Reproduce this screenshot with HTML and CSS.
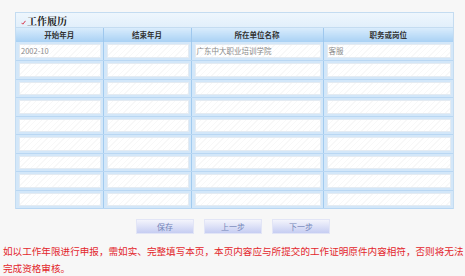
FILE: index.html
```html
<!DOCTYPE html>
<html lang="zh-CN">
<head>
<meta charset="utf-8">
<title>工作履历</title>
<link rel="stylesheet" href="styles.css">
</head>
<body>
<div class="page">
  <div class="panel">
    <div class="panel-title">
      <svg class="mark" width="5" height="5" viewBox="0 0 6 6"><path d="M0.6 3.4 L2.2 5 L5.4 1" fill="none" stroke="#d8344a" stroke-width="1.2"/></svg>
      <span>工作履历</span>
    </div>
    <table class="grid">
      <colgroup>
        <col class="c1"><col class="c2"><col class="c3"><col class="c4">
      </colgroup>
      <thead>
        <tr><th>开始年月</th><th>结束年月</th><th>所在单位名称</th><th>职务或岗位</th></tr>
      </thead>
      <tbody>
        <tr><td><div class="field">2002-10</div></td><td><div class="field"></div></td><td><div class="field">广东中大职业培训学院</div></td><td><div class="field">客服</div></td></tr>
        <tr><td><div class="field"></div></td><td><div class="field"></div></td><td><div class="field"></div></td><td><div class="field"></div></td></tr>
        <tr><td><div class="field"></div></td><td><div class="field"></div></td><td><div class="field"></div></td><td><div class="field"></div></td></tr>
        <tr><td><div class="field"></div></td><td><div class="field"></div></td><td><div class="field"></div></td><td><div class="field"></div></td></tr>
        <tr><td><div class="field"></div></td><td><div class="field"></div></td><td><div class="field"></div></td><td><div class="field"></div></td></tr>
        <tr><td><div class="field"></div></td><td><div class="field"></div></td><td><div class="field"></div></td><td><div class="field"></div></td></tr>
        <tr><td><div class="field"></div></td><td><div class="field"></div></td><td><div class="field"></div></td><td><div class="field"></div></td></tr>
        <tr><td><div class="field"></div></td><td><div class="field"></div></td><td><div class="field"></div></td><td><div class="field"></div></td></tr>
        <tr><td><div class="field"></div></td><td><div class="field"></div></td><td><div class="field"></div></td><td><div class="field"></div></td></tr>
      </tbody>
    </table>
  </div>
  <div class="actions">
    <button class="btn" type="button">保存</button>
    <button class="btn" type="button">上一步</button>
    <button class="btn" type="button">下一步</button>
  </div>
</div>
<p class="note">如以工作年限进行申报，需如实、完整填写本页，本页内容应与所提交的工作证明原件内容相符，否则将无法完成资格审核。</p>
</body>
</html>
```
FILE: styles.css
```css
html, body {
  margin: 0;
  padding: 0;
  background: #f7f7f7;
  font-family: "Noto Sans CJK SC", "Noto Sans", sans-serif;
}

.page {
  padding: 12px 10px 0 15px;
}

.panel {
  width: 439px;
  border: 1px solid #c4dcf1;
  border-bottom: none;
  box-sizing: border-box;
  background: #eaf4fd;
}

.panel-title {
  height: 15px;
  display: flex;
  align-items: center;
  gap: 1px;
  padding-left: 5px;
  background: linear-gradient(#eef6fd, #e2effb);
  font-family: "Noto Serif CJK SC", "Noto Sans CJK SC", serif;
  font-weight: bold;
  font-size: 10px;
  color: #222;
  border-bottom: 1px solid #c4dcf1;
  box-sizing: border-box;
}

.mark {
  margin-top: 4px;
}

.grid {
  width: 100%;
  border-collapse: collapse;
  table-layout: fixed;
}

.c1 { width: 87px; }
.c2 { width: 88px; }
.c3 { width: 132px; }
.c4 { width: auto; }

.grid th {
  height: 14px;
  padding: 0;
  background: linear-gradient(#d9ecfc, #a9d1f4);
  font-size: 7.5px;
  font-weight: bold;
  color: #333;
  border-right: 1px solid #9fc8ee;
  line-height: 14px;
}

.grid th:last-child,
.grid td:last-child {
  border-right: none;
}

.grid td {
  height: 18.5px;
  padding: 2px 2px 2px 3px;
  box-sizing: border-box;
  background: #d3e7f9;
  border-right: 1px solid #a2cbef;
  border-bottom: 1px solid #b9d7f3;
}

.field {
  height: 13.5px;
  box-sizing: border-box;
  border: 1px solid #e4ebf2;
  background-color: #fff;
  background-image: repeating-linear-gradient(135deg, #ffffff 0 3px, #f8f8f8 3px 4px);
  font-size: 7.5px;
  line-height: 12px;
  color: #8a8a8a;
  padding-left: 1px;
  white-space: nowrap;
  overflow: hidden;
}

.actions {
  display: flex;
  justify-content: center;
  gap: 10px;
  margin-top: 10px;
  padding-right: 4px;
}

.btn {
  width: 58px;
  height: 15px;
  padding: 0;
  border: 1px solid #e2e5f6;
  background: linear-gradient(#f3f4fc, #c6cdf2);
  font-family: "Noto Sans CJK SC", sans-serif;
  font-size: 8px;
  color: #7484b8;
  cursor: pointer;
}

.note {
  margin: 9px 0 0 3px;
  font-size: 9.6px;
  line-height: 17px;
  color: #e3262c;
}
```
